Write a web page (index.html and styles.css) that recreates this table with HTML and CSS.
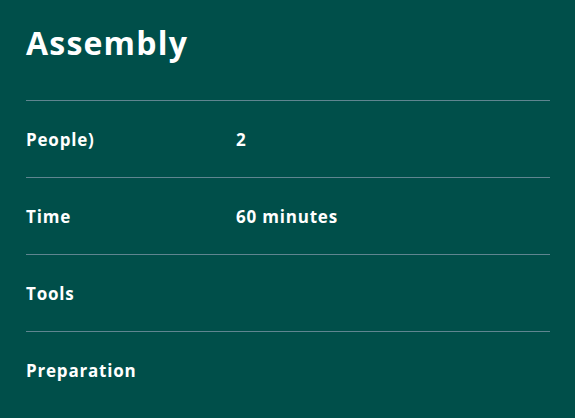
FILE: index.html
```html
<!DOCTYPE html>
<html lang="en">
<head>
<meta charset="utf-8">
<link rel="stylesheet" href="styles.css">
</head>
<body>
<section class="card">
  <h1 class="title">Assembly</h1>
  <dl class="specs">
    <div class="row"><dt>People)</dt><dd>2</dd></div>
    <div class="row"><dt>Time</dt><dd>60 minutes</dd></div>
    <div class="row"><dt>Tools</dt><dd></dd></div>
    <div class="row"><dt>Preparation</dt><dd></dd></div>
  </dl>
</section>
</body>
</html>
```

FILE: styles.css
```css
html, body {
  margin: 0;
  padding: 0;
  background: #004f4a;
  height: 100%;
}
body {
  font-family: "Open Sans", Lato, sans-serif;
  color: #ffffff;
}
.card {
  padding: 23px 25px 0 26px;
}
.title {
  margin: 0 0 37px 0;
  font-size: 32px;
  line-height: 40px;
  font-weight: 700;
  letter-spacing: 1.2px;
}
.specs {
  margin: 0;
}
.row {
  display: grid;
  grid-template-columns: 210px 1fr;
  align-items: center;
  height: 76px;
  border-top: 1px solid #5f8590;
}
.row dt, .row dd {
  margin: 0;
  padding-top: 2px;
  font-size: 17px;
  font-weight: 700;
  line-height: 22px;
  letter-spacing: 0.8px;
}
```
